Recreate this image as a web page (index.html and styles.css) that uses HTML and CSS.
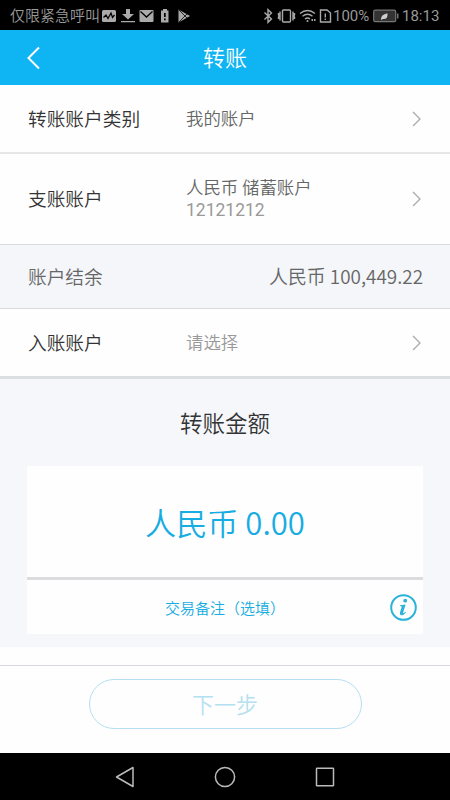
FILE: index.html
```html
<!DOCTYPE html>
<html lang="zh-CN">
<head>
<meta charset="utf-8">
<meta name="viewport" content="width=device-width, initial-scale=1">
<title>转账</title>
<link rel="stylesheet" href="styles.css">
</head>
<body>
<div class="screen">
  <div class="status">
    <span class="carrier">仅限紧急呼叫</span>
    <svg class="status-left" width="90" height="16" viewBox="0 0 90 16" fill="#aaa">
      <rect x="0" y="2" width="14" height="12" rx="1.500"/>
      <path d="M1.500 9.500L4 7l2 3.500L9 5l1.500 4.500L12.500 7" fill="none" stroke="#000" stroke-width="1.300"/>
      <path d="M24 1h4v5h4l-6 5.500L20 6h4zM19 13h14v1.300H19z"/>
      <rect x="37.500" y="2" width="14" height="12" rx="1"/>
      <path d="M38.500 3.500l6 5.500 6-5.500" fill="none" stroke="#000" stroke-width="1.300"/>
      <path d="M61 1h4v1.500h1.500v12h-7.500v-12H61z"/>
      <path d="M62 5h1.700v4H62zM62 10.500h1.700v1.700H62z" fill="#000"/>
      <path d="M76.500 1.500L88 8l-11.500 6.500z"/>
      <path d="M77 2l8 8M77 14l8-8" stroke="#000" stroke-width=".8"/>
    </svg>
    <svg class="status-right" width="69" height="16" viewBox="0 0 69 16" fill="none" stroke="#aaa" stroke-width="1.400">
      <path d="M1.500 4.500l7 6.500-3.500 3.300V1.700L8.500 5l-7 6.500"/>
      <rect x="19.500" y="2" width="8" height="12" rx="1"/>
      <path d="M17 3.500v9M30 3.500v9M15.500 5v2l1 1-1 1v2M31.500 5v2l-1 1 1 1v2"/>
      <path d="M37 5.500q7.500-6 15 0M39.500 8.300q5-4 10 0M42 11q2.500-2 5 0"/>
      <circle cx="44.500" cy="13" r="1" fill="#aaa" stroke="none"/>
      <path d="M48.500 12h1.500M51 12h1.500" stroke-width="2"/>
      <path d="M57.500 2h6.500l3.500 3v9h-10zM62.300 5.500v4M62.300 10.500v1.500"/>
    </svg>
    <span class="percent">100%</span>
    <svg class="battery" width="27" height="14" viewBox="0 0 27 14">
      <rect x=".7" y="1.200" width="22" height="11.500" rx="1.500" fill="#333" stroke="#777" stroke-width="1.200"/>
      <path d="M24.800 4.500v5" stroke="#888" stroke-width="1.300"/>
      <path d="M8 11q-.5-5.500 6.500-6.800Q15 10.500 10 10z" fill="#ccc"/>
    </svg>
    <span class="time">18:13</span>
  </div>

  <header class="header">
    <svg class="back" width="14" height="24" viewBox="0 0 14 24"><path d="M12 1.500L1.500 12 12 22.500"/></svg>
    <h1 class="title">转账</h1>
  </header>

  <main class="content">
    <div class="row row-type">
      <span class="label">转账账户类别</span>
      <span class="value">我的账户</span>
      <svg class="chevron" width="9" height="16" viewBox="0 0 9 16"><path d="M1 1l7 7-7 7"/></svg>
    </div>
    <div class="row row-from">
      <span class="label">支账账户</span>
      <div class="value"><div class="account">人民币 储蓄账户</div><div class="number">12121212</div></div>
      <svg class="chevron" width="9" height="16" viewBox="0 0 9 16"><path d="M1 1l7 7-7 7"/></svg>
    </div>
    <div class="row balance">
      <span>账户结余</span>
      <span class="balance-sum">人民币 100,449.22</span>
    </div>
    <div class="row row-to">
      <span class="label">入账账户</span>
      <span class="value placeholder">请选择</span>
      <svg class="chevron" width="9" height="16" viewBox="0 0 9 16"><path d="M1 1l7 7-7 7"/></svg>
    </div>
    <section class="amount">
      <h2 class="amount-title">转账金额</h2>
      <div class="card">
        <div class="sum">人民币 0.00</div>
        <div class="note">
          <span class="note-text">交易备注（选填）</span>
          <svg class="info" width="27" height="27" viewBox="0 0 27 27">
            <circle cx="13.500" cy="13.500" r="12.300"/>
            <circle class="solid" cx="15.200" cy="6.700" r="1.900"/>
            <path class="solid" d="M10 11.200l5.600-.8-2.600 8.600q-.1.900 2.300-1.300l.6.700q-2.700 3.200-4.800 2.800-1.800-.4-1.100-2.700l1.700-5.700q.1-.7-1.700-.7z"/>
          </svg>
        </div>
      </div>
    </section>
  </main>

  <footer class="footer"><button class="next" disabled>下一步</button></footer>

  <nav class="nav">
    <svg width="20" height="22" viewBox="0 0 20 22"><path d="M18 1.500v19L1.500 11z"/></svg>
    <svg width="22" height="22" viewBox="0 0 22 22"><circle cx="11" cy="11" r="9.600"/></svg>
    <svg width="20" height="22" viewBox="0 0 20 22"><rect x="1.500" y="2.200" width="17" height="17.500" rx=".5"/></svg>
  </nav>
</div>
</body>
</html>
```

FILE: styles.css
```css
* {
  box-sizing: border-box;
}

body {
  margin: 0;
  background: #fff;
  font-family: "Noto Sans CJK SC", sans-serif;
  font-weight: 350;
}

.screen {
  display: flex;
  flex-direction: column;
  width: 450px;
  height: 800px;
  overflow: hidden;
  background: #fefefe;
}

svg {
  flex: none;
  display: block;
}

.status {
  display: flex;
  align-items: center;
  flex: none;
  height: 30px;
  padding: 1px 10px 0;
  background: #000;
  color: #999;
  line-height: 20px;
  white-space: nowrap;
}

.carrier {
  width: 93px;
  padding-bottom: 1px;
  font-size: 15px;
}

.status-left {
  margin-left: -1px;
}

.status-right {
  margin: 0 1px 0 auto;
}

.percent,
.time {
  font-family: Roboto, sans-serif;
  font-size: 15px;
  font-weight: 400;
}

.percent {
  width: 36px;
  margin-right: 4px;
}

.time {
  width: 38px;
  margin-left: 2px;
}

.header {
  display: grid;
  grid-template-columns: 27px 1fr 27px;
  align-items: center;
  flex: none;
  height: 55px;
  padding: 0 27px;
  background: #0fb4f2;
  color: #fff;
}

.title {
  margin: 0;
  padding-bottom: 3px;
  font-size: 22px;
  font-weight: 350;
  line-height: 32px;
  text-align: center;
}

.back path {
  fill: none;
  stroke: #fff;
  stroke-width: 2;
}

.content {
  flex: none;
}

.row {
  display: flex;
  align-items: center;
  padding: 0 28px;
  border-bottom: 1px solid #d9dadd;
  background: #fefefe;
}

.row-type {
  height: 69px;
  border-bottom: 2px solid #e6e6e8;
}

.row-from {
  height: 91px;
}

.row-to {
  height: 70px;
  border-bottom: 3px solid #dcdfe2;
}

.label {
  width: 158px;
  padding-bottom: 2px;
  color: #333;
  font-size: 18.7px;
}

.row-from .label {
  padding-bottom: 3px;
}

.value {
  flex: 1;
  padding-bottom: 2px;
  color: #666;
  font-size: 17.4px;
}

.row-from .value {
  padding-bottom: 1px;
}

.account {
  line-height: 24px;
}

.number {
  color: #999;
  font-family: Roboto, sans-serif;
  font-size: 17.5px;
  font-weight: 400;
  line-height: 23px;
}

.placeholder {
  color: #999;
}

.chevron {
  margin-right: 1px;
}

.chevron path {
  fill: none;
  stroke: #aaa;
  stroke-width: 1.3;
}

.balance {
  justify-content: space-between;
  height: 64px;
  padding-bottom: 2px;
  background: #f4f6fa;
  color: #666;
  font-size: 18.7px;
}

.balance-sum {
  margin-right: -1px;
  font-size: 18.9px;
}

.amount {
  height: 268px;
  padding: 27px 27px 0;
  background: #f5f7fb;
}

.amount-title {
  height: 60px;
  margin: 0;
  color: #333;
  font-size: 22.5px;
  font-weight: 350;
  line-height: 32px;
  text-align: center;
}

.card {
  height: 168px;
  background: #fefefe;
}

.sum {
  height: 114px;
  border-bottom: 3px solid #dcdcdf;
  color: #18ade2;
  font-size: 31.1px;
  line-height: 112px;
  text-align: center;
}

.note {
  display: grid;
  grid-template-columns: 33px 1fr 33px;
  align-items: center;
  height: 54px;
  color: #18ade2;
}

.note-text {
  grid-column: 2;
  font-size: 15px;
  text-align: center;
}

.info circle {
  fill: none;
  stroke: #2ab2d9;
  stroke-width: 2;
}

.info .solid {
  fill: #2ab2d9;
  stroke: none;
}

.footer {
  flex: none;
  height: 88px;
  margin-top: 18px;
  padding-top: 13px;
  border-top: 1px solid #d5d8dc;
  text-align: center;
}

.next {
  width: 273px;
  height: 50px;
  padding: 0 0 2px;
  border: 1px solid #b5dff0;
  border-radius: 25px;
  background: transparent;
  color: #b5e0f0;
  font-family: inherit;
  font-size: 22px;
  font-weight: 350;
}

.nav {
  display: flex;
  align-items: center;
  justify-content: center;
  gap: 79px;
  flex: 1;
  background: #000;
}

.nav svg * {
  fill: none;
  stroke: #bbb;
  stroke-width: 1.5;
  stroke-linejoin: round;
}
```
